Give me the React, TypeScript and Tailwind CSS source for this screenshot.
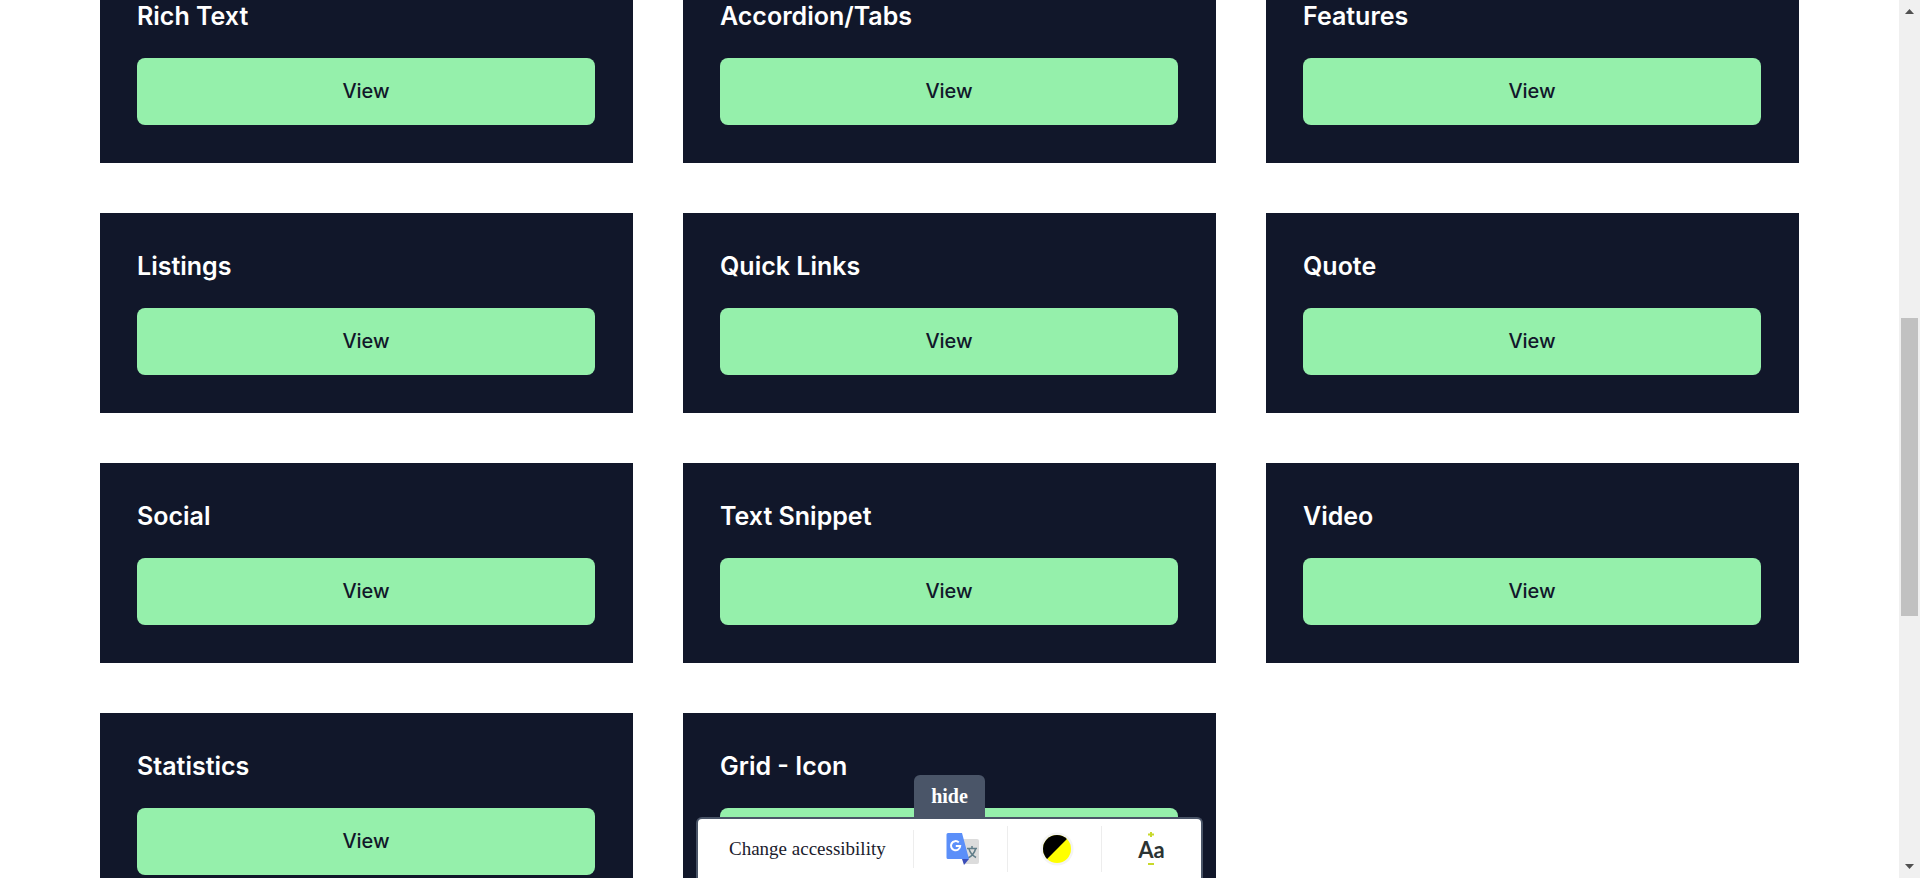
import React from "react";

const cards: string[] = [
  "Rich Text",
  "Accordion/Tabs",
  "Features",
  "Listings",
  "Quick Links",
  "Quote",
  "Social",
  "Text Snippet",
  "Video",
  "Statistics",
  "Grid - Icon",
];

function Card({ title }: { title: string }) {
  return (
    <article className="bg-[#11172a] pt-[37px] pr-[38px] pb-[38px] pl-[37px]">
      <h2 className="mb-[25px] text-[25px] leading-[33px] font-semibold text-white">{title}</h2>
      <a
        href="#"
        aria-label={`View ${title}`}
        className="flex h-[67px] items-center justify-center rounded-lg bg-[#95f0ab] pb-0.5 text-[20px] leading-7 font-medium text-[#11172a]"
      >
        View
      </a>
    </article>
  );
}

function TranslateIcon() {
  return (
    <svg width="34" height="34" viewBox="0 0 34 34" aria-hidden="true">
      <path d="M12 7h19a2 2 0 0 1 2 2v21a2 2 0 0 1-2 2H19z" fill="#dcdcdc" />
      <path
        d="M21 16.500h10M26 14v2.500M23 17c1 3.500 3.500 6.500 7 8.500M29.500 17c-1 4-3.500 7-7.500 9"
        fill="none"
        stroke="#607d88"
        strokeWidth="1.500"
      />
      <path d="M16 27h7l-5 6z" fill="#3a4db8" />
      <path d="M2 1h14l7 26H2a1.500 1.500 0 0 1-1.500-1.500v-23A1.500 1.500 0 0 1 2 1z" fill="#5b8ff9" />
      <path
        d="M12.800 10.400a4.600 4.600 0 1 0 1.400 3.600H9.800"
        fill="none"
        stroke="#fff"
        strokeWidth="2"
      />
    </svg>
  );
}

function ContrastIcon() {
  return (
    <svg width="34" height="34" viewBox="0 0 34 34" aria-hidden="true">
      <circle cx="17" cy="17" r="16.500" fill="#f4f4f4" />
      <circle cx="17" cy="17" r="14" fill="#ffff00" />
      <path d="M7.100 26.900A14 14 0 0 1 26.900 7.100z" fill="#000" />
    </svg>
  );
}

function TextSizeIcon() {
  return (
    <span className="flex flex-col items-center">
      <svg width="6" height="5" viewBox="0 0 6 5" aria-hidden="true">
        <path d="M3 0v5M0 2.500h6" stroke="#c8d92b" strokeWidth="2" />
      </svg>
      <span className="font-['Lato'] text-[22px] leading-[26px] font-bold text-[#2b3333]">Aa</span>
      <svg width="6" height="2" viewBox="0 0 6 2" aria-hidden="true">
        <path d="M0 1h6" stroke="#c8d92b" strokeWidth="2" />
      </svg>
    </span>
  );
}

function AccessibilityBar() {
  return (
    <aside className="absolute inset-x-0 bottom-0 flex flex-col items-center font-['Liberation_Serif',serif]">
      <button
        type="button"
        className="h-[42px] rounded-t-md bg-[#4a5568] px-[17px] text-[20px] leading-6 font-bold text-white"
      >
        hide
      </button>
      <div className="flex h-[61px] items-center rounded-t-md border-2 border-b-0 border-[#4a5568] bg-white pr-[3px]">
        <p className="w-[215px] pl-[31px] text-[19px] leading-6 text-[#1a202c]">Change accessibility</p>
        <button
          type="button"
          aria-label="Translate"
          className="flex h-[38px] w-[94px] items-center justify-center border-l border-[#ededed] pl-[5px]"
        >
          <TranslateIcon />
        </button>
        <button
          type="button"
          aria-label="Contrast"
          className="flex h-[46px] w-[94px] items-center justify-center border-l border-[#ededed] pl-[5px]"
        >
          <ContrastIcon />
        </button>
        <button
          type="button"
          aria-label="Text size"
          className="flex h-[46px] w-[97px] items-center justify-center border-l border-[#ededed] pl-[3px]"
        >
          <TextSizeIcon />
        </button>
      </div>
    </aside>
  );
}

function Scrollbar() {
  return (
    <div aria-hidden="true" className="flex w-[21px] shrink-0 flex-col items-center bg-[#f0f0f0]">
      <svg width="9" height="5" viewBox="0 0 9 5" className="mt-[9px]">
        <path d="M4.500 0L9 5H0z" fill="#505050" />
      </svg>
      <div className="flex w-full grow flex-col py-[5px]">
        <div className="grow-[299]" />
        <div className="mx-[2px] h-[298px] bg-[#c1c1c1]" />
        <div className="grow-[243]" />
      </div>
      <svg width="9" height="5" viewBox="0 0 9 5" className="mb-[9px]">
        <path d="M0 0h9L4.500 5z" fill="#505050" />
      </svg>
    </div>
  );
}

export default function App() {
  return (
    <div className="flex h-screen overflow-hidden bg-white font-['Inter',sans-serif]">
      <main className="relative grow overflow-hidden">
        <div className="-mt-[37px] grid grid-cols-3 gap-[50px] px-[100px]">
          {cards.map((title) => (
            <Card key={title} title={title} />
          ))}
        </div>
        <AccessibilityBar />
      </main>
      <Scrollbar />
    </div>
  );
}
